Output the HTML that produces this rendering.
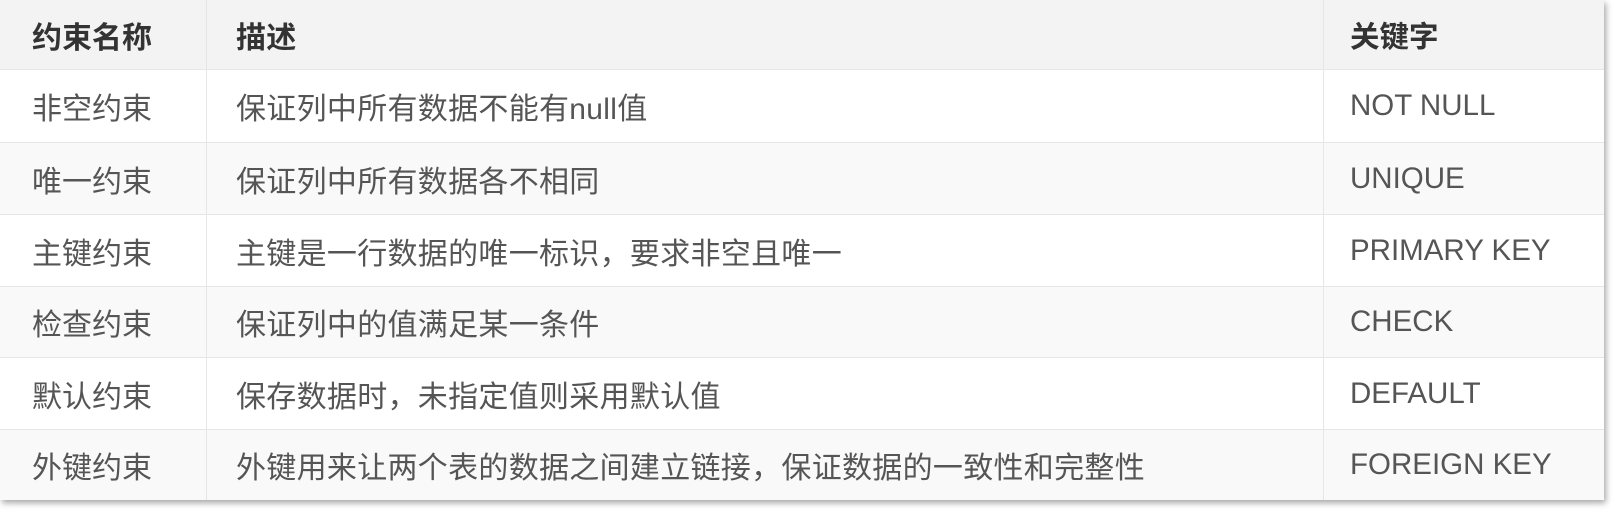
<!DOCTYPE html>
<html><head><meta charset="utf-8"><style>
html,body{margin:0;padding:0;background:#fff;width:1618px;height:520px;overflow:hidden}
.t{position:absolute;left:0;top:0;width:1604px;height:500px;box-shadow:2px 3px 6px rgba(0,0,0,0.35);background:#fff}
.r{position:absolute;left:0;width:1604px;height:71px;border-bottom:1px solid #e6e6e6;box-sizing:border-box;font-family:"Liberation Sans","Noto Sans CJK SC",sans-serif;font-size:30px;color:#555}
.r div{position:absolute;top:0;height:100%;display:flex;align-items:center;box-sizing:border-box;white-space:nowrap}
.c1{left:0;width:207px;padding-left:32px;border-right:1px solid #e6e6e6}
.c2{left:207px;width:1117px;padding-left:29px;border-right:1px solid #e6e6e6;letter-spacing:0.3px}
.c3{left:1324px;width:280px;padding-left:26px;font-size:29.5px}
.h{background:#f3f3f3;font-weight:bold;color:#333}
.g{background:#f9f9f9}
</style></head><body><div class="t">
<div class="r h" style="top:0;height:70px"><div class="c1">约束名称</div><div class="c2">描述</div><div class="c3">关键字</div></div>
<div class="r" style="top:70px;height:73px"><div class="c1">非空约束</div><div class="c2">保证列中所有数据不能有null值</div><div class="c3">NOT NULL</div></div>
<div class="r g" style="top:143px;height:72px"><div class="c1">唯一约束</div><div class="c2">保证列中所有数据各不相同</div><div class="c3">UNIQUE</div></div>
<div class="r" style="top:215px;height:72px"><div class="c1">主键约束</div><div class="c2">主键是一行数据的唯一标识，要求非空且唯一</div><div class="c3">PRIMARY KEY</div></div>
<div class="r g" style="top:287px;height:71px"><div class="c1">检查约束</div><div class="c2">保证列中的值满足某一条件</div><div class="c3">CHECK</div></div>
<div class="r" style="top:358px;height:72px"><div class="c1">默认约束</div><div class="c2">保存数据时，未指定值则采用默认值</div><div class="c3">DEFAULT</div></div>
<div class="r g" style="top:430px;height:70px;border-bottom:none"><div class="c1">外键约束</div><div class="c2">外键用来让两个表的数据之间建立链接，保证数据的一致性和完整性</div><div class="c3">FOREIGN KEY</div></div>
</div></body></html>
